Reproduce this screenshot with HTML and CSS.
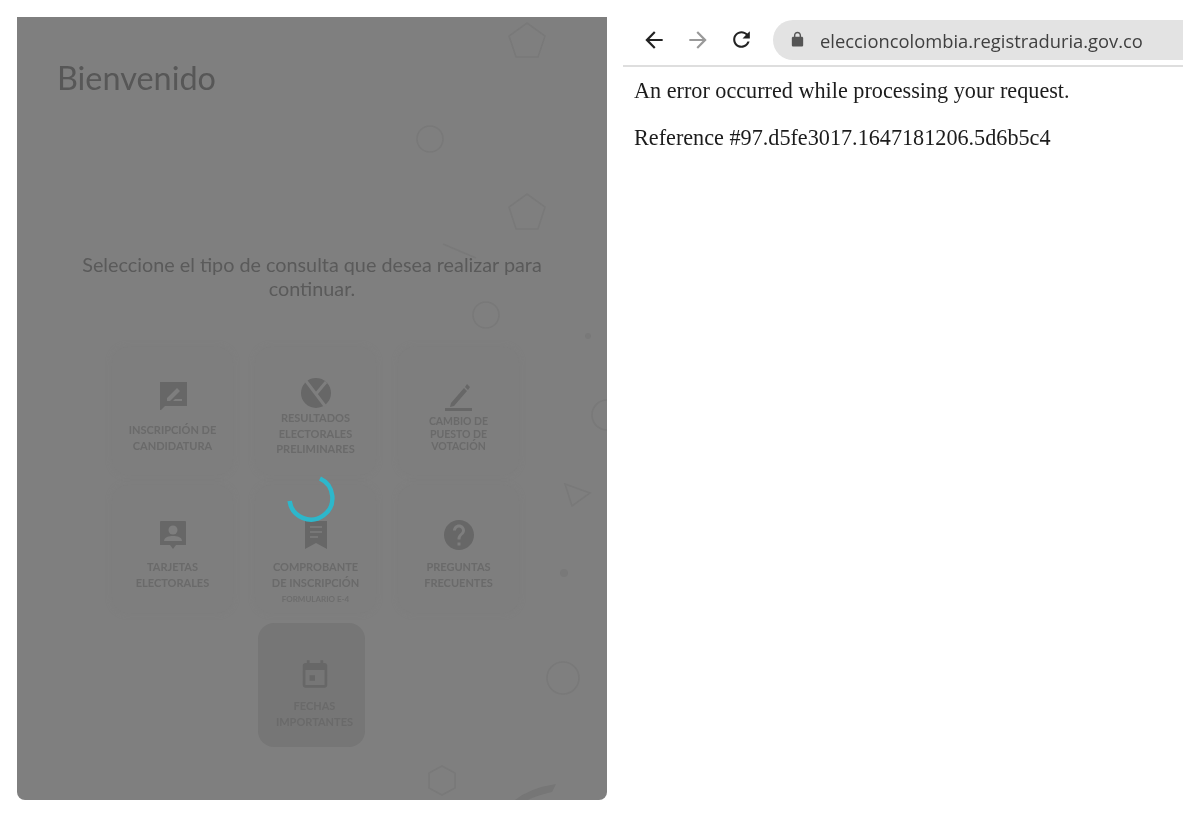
FILE: index.html
```html
<!DOCTYPE html>
<html lang="es">
<head>
<meta charset="utf-8">
<title>Bienvenido</title>
<link rel="stylesheet" href="styles.css">
</head>
<body>
<main class="panel">
  <svg class="decor" viewBox="17 17 590 783" aria-hidden="true">
    <g class="decor-lines">
      <polygon points="527,23 545,36 538,57 516,57 509,36"/>
      <circle cx="430" cy="139" r="13"/>
      <polygon points="527,194 545,207 538,229 516,229 509,207"/>
      <path d="M443 244 L476 258"/>
      <circle cx="486" cy="315" r="13"/>
      <circle cx="607" cy="415" r="15"/>
      <polygon points="565,484 590,493 572,506"/>
      <path d="M417 597 L456 612"/>
      <circle cx="563" cy="678" r="16"/>
      <polygon points="442,766 455,773 455,788 442,795 429,788 429,773"/>
    </g>
    <circle class="decor-dot" cx="588" cy="336" r="3"/>
    <circle class="decor-dot" cx="564" cy="573" r="4"/>
    <path class="decor-swoosh" d="M515 800 Q530 788 556 784 L552 792 Q535 796 528 800z"/>
  </svg>

  <h1 class="title">Bienvenido</h1>
  <p class="lead">Seleccione el tipo de consulta que desea realizar para continuar.</p>

  <div class="menu">
    <a class="card card-a">
      <svg class="icon" viewBox="0 0 30 30"><path class="ink" d="M2 2h27v24H7l-5 5z"/><path class="cut" d="M9 18 19 8l3 3-10 10H9zM15 21h9v-2h-7z"/></svg>
      <span class="label">Inscripción de<br>candidatura</span>
    </a>
    <a class="card card-b">
      <svg class="icon" viewBox="0 0 30 30"><circle class="ink" cx="15" cy="15" r="15"/><path class="cut-line" d="M5 3 L24 28M15 16 L25 4"/></svg>
      <span class="label">Resultados<br>electorales<br>preliminares</span>
    </a>
    <a class="card card-c">
      <svg class="icon" viewBox="0 0 30 30"><path class="ink" d="M7 21 20 6l3 3L10 24l-4 1zM21 5l2-3 3 3-2 3zM1 26h27v3H1z"/></svg>
      <span class="label">Cambio de<br>puesto de<br>votación</span>
    </a>
    <a class="card card-d">
      <svg class="icon" viewBox="0 0 30 30"><path class="ink" d="M3 1h24a1 1 0 0 1 1 1v23H18l-3 4-3-4H2V2a1 1 0 0 1 1-1z"/><circle class="cut" cx="15" cy="10" r="4.5"/><path class="cut" d="M6 21c0-4 5-5 9-5s9 1 9 5z"/></svg>
      <span class="label">Tarjetas<br>electorales</span>
    </a>
    <a class="card card-e">
      <svg class="icon" viewBox="0 0 30 30"><path class="ink" d="M4 1h22v28l-11-6-11 6z"/><path class="cut-thin" d="M9 7h12M9 12h12M9 17h8"/></svg>
      <span class="label">Comprobante<br>de inscripción</span>
      <span class="sublabel">Formulario E-4</span>
    </a>
    <a class="card card-f">
      <svg class="icon" viewBox="2 2 20 20"><path class="ink" d="M12 2C6.48 2 2 6.48 2 12s4.48 10 10 10 10-4.48 10-10S17.52 2 12 2zm1 17h-2v-2h2v2zm2.07-7.75l-.9.92C13.45 12.9 13 13.5 13 15h-2v-.5c0-1.1.45-2.1 1.17-2.83l1.24-1.26c.37-.36.59-.86.59-1.41 0-1.1-.9-2-2-2s-2 .9-2 2H8c0-2.21 1.79-4 4-4s4 1.79 4 4c0 .88-.36 1.68-.93 2.25z"/></svg>
      <span class="label">Preguntas<br>frecuentes</span>
    </a>
    <a class="card card-g">
      <svg class="icon" viewBox="1 0 22 22"><path class="ink" d="M12 12H8v4h4v-4zM16 1v2H8V1H6v2H5c-1.11 0-1.99.9-1.99 2L3 19c0 1.1.89 2 2 2h14c1.1 0 2-.9 2-2V5c0-1.1-.9-2-2-2h-1V1h-2zm3 18H5V8h14v11z"/></svg>
      <span class="label">Fechas<br>importantes</span>
    </a>
  </div>

  <svg class="spinner" viewBox="0 0 48 48" aria-hidden="true"><path d="M33 4.5 A21.5 21.5 0 1 1 2.6 27"/></svg>
</main>

<section class="browser">
  <header class="toolbar">
    <svg class="nav nav-back" viewBox="0 0 24 24"><path d="M20 11H7.83l5.59-5.59L12 4l-8 8 8 8 1.41-1.41L7.83 13H20v-2z"/></svg>
    <svg class="nav nav-forward" viewBox="0 0 24 24"><path d="M4 11h12.17l-5.59-5.59L12 4l8 8-8 8-1.41-1.41L16.17 13H4v-2z"/></svg>
    <svg class="nav nav-reload" viewBox="0 0 24 24"><path d="M17.65 6.35C16.2 4.9 14.21 4 12 4c-4.42 0-7.99 3.58-7.99 8s3.57 8 7.99 8c3.73 0 6.84-2.55 7.73-6h-2.08c-.82 2.33-3.04 4-5.65 4-3.31 0-6-2.69-6-6s2.69-6 6-6c1.66 0 3.14.69 4.22 1.78L13 11h7V4l-2.35 2.35z"/></svg>
    <div class="omnibox">
      <svg class="lock" viewBox="0 0 24 24"><path d="M18 8h-1V6c0-2.76-2.24-5-5-5S7 3.24 7 6v2H6c-1.1 0-2 .9-2 2v10c0 1.1.9 2 2 2h12c1.1 0 2-.9 2-2V10c0-1.1-.9-2-2-2zM9 6c0-1.66 1.34-3 3-3s3 1.34 3 3v2H9V6z"/></svg>
      <span class="url">eleccioncolombia.registraduria.gov.co</span>
    </div>
  </header>
  <div class="error">
    <p>An error occurred while processing your request.</p>
    <p>Reference #97.d5fe3017.1647181206.5d6b5c4</p>
  </div>
</section>
</body>
</html>
```

FILE: styles.css
```css
* { box-sizing: border-box; }

html, body { height: 100%; }

body {
  margin: 0;
  padding: 17px;
  display: flex;
  gap: 16px;
  align-items: flex-start;
  background: #fff;
  overflow: hidden;
}

/* Dimmed welcome panel */
.panel {
  position: relative;
  flex: 0 0 590px;
  height: 783px;
  overflow: hidden;
  background: #7f7f7f;
  border-radius: 0 0 8px 8px;
  font-family: Lato, "Liberation Sans", sans-serif;
  color: #575757;
}

.decor {
  position: absolute;
  inset: 0;
  width: 100%;
  height: 100%;
  filter: blur(0.6px);
}

.decor-lines {
  fill: none;
  stroke: #797979;
  stroke-width: 1.6;
}

.decor-dot { fill: #797979; }

.decor-swoosh { fill: #767676; }

.title {
  position: relative;
  margin: 0;
  padding: 42px 0 0 40px;
  font-size: 32.4px;
  line-height: 38px;
  font-weight: 400;
  filter: blur(0.5px);
}

.lead {
  position: relative;
  width: 490px;
  margin: 155px 0 0 50px;
  font-size: 19.8px;
  line-height: 24px;
  text-align: center;
  color: #5a5a5a;
  filter: blur(0.4px);
}

.menu {
  position: relative;
  display: grid;
  grid-template-columns: repeat(3, 121px);
  grid-template-rows: 128px 128px 124px;
  column-gap: 22px;
  row-gap: 10px;
  margin: 47px 0 0 95px;
}

.card {
  display: flex;
  flex-direction: column;
  align-items: center;
  border-radius: 16px;
  background: #7e7e7e;
  box-shadow: 0 0 6px rgba(124, 124, 124, 0.35);
  padding-top: 35px;
}

.icon {
  flex: none;
  width: 30px;
  height: 30px;
  margin-bottom: 9px;
  filter: blur(0.4px);
}

.ink { fill: #676767; }
.cut { fill: #7e7e7e; }

.cut-line {
  fill: none;
  stroke: #7e7e7e;
  stroke-width: 3;
}

.cut-thin {
  fill: none;
  stroke: #7e7e7e;
  stroke-width: 1.5;
}

.label {
  font-size: 11px;
  font-weight: 700;
  line-height: 15.5px;
  text-align: center;
  text-transform: uppercase;
  color: #6a6a6a;
  filter: blur(0.6px);
}

.sublabel {
  margin-top: 5px;
  font-size: 8px;
  font-weight: 700;
  line-height: 9px;
  text-transform: uppercase;
  color: #6d6d6d;
  filter: blur(0.6px);
}

.card-a { padding-top: 33px; }
.card-a .icon { margin-bottom: 12px; }

.card-b { padding-top: 31px; }
.card-b .icon { margin-bottom: 2px; }

.card-c { padding-top: 35px; }
.card-c .icon { margin-bottom: 3px; }
.card-c .label { line-height: 12.5px; font-size: 10.5px; }

.card-g {
  grid-column: 2;
  justify-self: center;
  width: 107px;
  margin-right: 9px;
  padding: 36px 0 0 7px;
  background: #767676;
  box-shadow: none;
}

.card-g .cut { fill: #767676; }

.spinner {
  position: absolute;
  left: 270px;
  top: 457px;
  width: 48px;
  height: 48px;
  fill: none;
  stroke: #2db7cb;
  stroke-width: 4.5;
}

/* Browser capture */
.browser {
  flex: 0 0 560px;
  margin-top: 3px;
}

.toolbar {
  display: flex;
  align-items: center;
  height: 47px;
  padding-bottom: 6px;
  border-bottom: 2px solid #dedede;
}

.nav {
  flex: none;
  width: 26px;
  height: 26px;
  margin-left: 18px;
  fill: #222;
}

.nav-back { margin-left: 18px; }
.nav-forward { fill: #999; }
.nav-reload { width: 25px; height: 25px; }

.omnibox {
  display: flex;
  align-items: center;
  flex: 1;
  height: 40px;
  margin-left: 19px;
  padding-left: 16px;
  border-radius: 20px 0 0 20px;
  background: #e3e3e3;
}

.lock {
  flex: none;
  width: 17px;
  height: 17px;
  fill: #555;
}

.url {
  margin: 1px 0 0 14px;
  font-family: "Open Sans", "Liberation Sans", sans-serif;
  font-size: 18.35px;
  color: #3f3f3f;
  filter: blur(0.3px);
}

.error {
  padding: 12px 0 0 11px;
  font-family: "Liberation Serif", serif;
  font-size: 22.2px;
  line-height: 24px;
  color: #1c1c1c;
  filter: blur(0.3px);
}

.error p { margin: 0 0 23px; }
```
